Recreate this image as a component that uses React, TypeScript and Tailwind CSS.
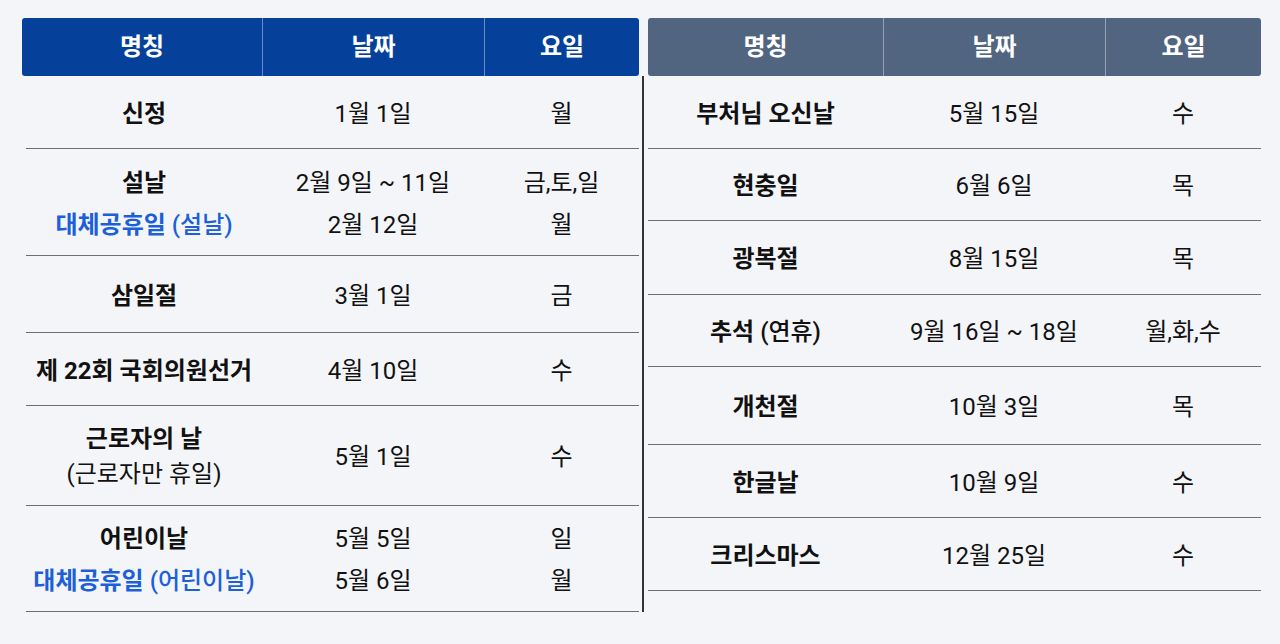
import React from "react"

interface Row {
  h: string
  lead?: string
  names: React.ReactNode[]
  dates: string[]
  days: string[]
}

const SUB = (main: string, extra: string) => (
  <span className="text-[#1d5fd8]">
    <span className="font-bold">{main}</span> <span className="font-medium">{extra}</span>
  </span>
)

const LEFT: Row[] = [
  { h: "h-[73px]", names: [<b key="a">신정</b>], dates: ["1월 1일"], days: ["월"] },
  {
    h: "h-[107px]",
    names: [<b key="a">설날</b>, SUB("대체공휴일", "(설날)")],
    dates: ["2월 9일 ~ 11일", "2월 12일"],
    days: ["금,토,일", "월"],
  },
  { h: "h-[77px]", names: [<b key="a">삼일절</b>], dates: ["3월 1일"], days: ["금"] },
  { h: "h-[73px]", names: [<b key="a">제 22회 국회의원선거</b>], dates: ["4월 10일"], days: ["수"] },
  {
    h: "h-[100px]",
    lead: "leading-[35px]",
    names: [<b key="a">근로자의 날</b>, <span key="b">(근로자만 휴일)</span>],
    dates: ["5월 1일"],
    days: ["수"],
  },
  {
    h: "h-[106px]",
    names: [<b key="a">어린이날</b>, SUB("대체공휴일", "(어린이날)")],
    dates: ["5월 5일", "5월 6일"],
    days: ["일", "월"],
  },
]

const RIGHT: Row[] = [
  { h: "h-[73px]", names: [<b key="a">부처님 오신날</b>], dates: ["5월 15일"], days: ["수"] },
  { h: "h-[72px]", names: [<b key="a">현충일</b>], dates: ["6월 6일"], days: ["목"] },
  { h: "h-[74px]", names: [<b key="a">광복절</b>], dates: ["8월 15일"], days: ["목"] },
  {
    h: "h-[72px]",
    names: [
      <span key="a">
        <b>추석</b> <span className="font-medium">(연휴)</span>
      </span>,
    ],
    dates: ["9월 16일 ~ 18일"],
    days: ["월,화,수"],
  },
  { h: "h-[78px]", names: [<b key="a">개천절</b>], dates: ["10월 3일"], days: ["목"] },
  { h: "h-[73px]", names: [<b key="a">한글날</b>], dates: ["10월 9일"], days: ["수"] },
  { h: "h-[73px]", names: [<b key="a">크리스마스</b>], dates: ["12월 25일"], days: ["수"] },
]

function Cell({ items, w, lead }: { items: React.ReactNode[]; w: string; lead: string }) {
  return (
    <div className={`${w} flex flex-col items-center justify-center pt-[3px] ${lead}`}>
      {items.map((item, i) => (
        <div key={i} className="whitespace-nowrap">
          {item}
        </div>
      ))}
    </div>
  )
}

function Table({
  rows,
  head,
  cols,
  bodyOffset,
}: {
  rows: Row[]
  head: string
  cols: [string, string, string]
  bodyOffset: string
}) {
  return (
    <div className="flex flex-col">
      <div className={`flex h-[58px] rounded-[3px] text-[24px] font-bold text-white ${head}`}>
        <div className={`${cols[0]} flex items-center justify-center`}>명칭</div>
        <div className="w-[222px] flex items-center justify-center border-l border-white/40">날짜</div>
        <div className={`${cols[2]} flex items-center justify-center border-l border-white/40`}>요일</div>
      </div>
      <div className={`flex flex-col ${bodyOffset}`}>
        {rows.map((row, i) => {
          const lead = row.lead ?? "leading-[42px]"
          return (
            <div key={i} className={`flex ${row.h} border-b border-[#6f6f6f]`}>
              <Cell items={row.names} w={cols[1]} lead={lead} />
              <Cell items={row.dates} w="w-[222px]" lead={lead} />
              <Cell items={row.days} w={cols[2]} lead={lead} />
            </div>
          )
        })}
      </div>
    </div>
  )
}

export default function App() {
  return (
    <main
      className="min-h-[644px] w-full bg-[#f4f5f8] text-[24px] text-[#111]"
      style={{ fontFamily: 'Roboto, "Noto Sans CJK KR", sans-serif' }}
    >
      <div className="flex pl-[22px] pt-[18px]">
        <div className="w-[617px]">
          <Table
            rows={LEFT}
            head="bg-[#05419a]"
            cols={["w-[240px]", "w-[236px]", "w-[155px]"]}
            bodyOffset="ml-[4px]"
          />
        </div>
        <div className="w-[9px] pl-[3px]">
          <div className="mt-[58px] h-[536px] w-[2px] bg-[#333]" />
        </div>
        <div className="w-[613px]">
          <Table
            rows={RIGHT}
            head="bg-[#516580]"
            cols={["w-[235px]", "w-[235px]", "w-[156px]"]}
            bodyOffset=""
          />
        </div>
      </div>
    </main>
  )
}
